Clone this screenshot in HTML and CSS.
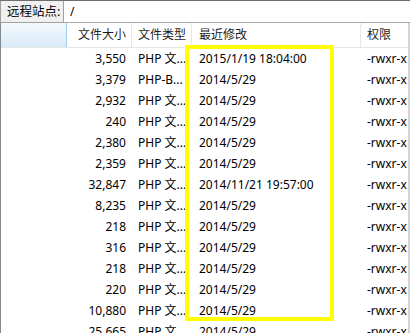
FILE: index.html
```html
<!DOCTYPE html>
<html lang="zh">
<head>
<meta charset="utf-8">
<link rel="stylesheet" href="styles.css">
</head>
<body>
<div class="panel">
  <div class="bar">
    <div class="lbl">远程站点:</div>
    <div class="path">/</div>
  </div>
  <div class="list">
    <div class="head">
      <div class="hc name"></div>
      <div class="hc size">文件大小</div>
      <div class="hc type">文件类型</div>
      <div class="hc date">最近修改</div>
      <div class="hc perm">权限</div>
    </div>
    <div class="row"><div></div><div class="size">3,550</div><div class="type">PHP 文...</div><div class="date">2015/1/19 18:04:00</div><div class="perm">-rwxr-x</div></div>
    <div class="row"><div></div><div class="size">3,379</div><div class="type">PHP-B...</div><div class="date">2014/5/29</div><div class="perm">-rwxr-x</div></div>
    <div class="row"><div></div><div class="size">2,932</div><div class="type">PHP 文...</div><div class="date">2014/5/29</div><div class="perm">-rwxr-x</div></div>
    <div class="row"><div></div><div class="size">240</div><div class="type">PHP 文...</div><div class="date">2014/5/29</div><div class="perm">-rwxr-x</div></div>
    <div class="row"><div></div><div class="size">2,380</div><div class="type">PHP 文...</div><div class="date">2014/5/29</div><div class="perm">-rwxr-x</div></div>
    <div class="row"><div></div><div class="size">2,359</div><div class="type">PHP 文...</div><div class="date">2014/5/29</div><div class="perm">-rwxr-x</div></div>
    <div class="row"><div></div><div class="size">32,847</div><div class="type">PHP 文...</div><div class="date">2014/11/21 19:57:00</div><div class="perm">-rwxr-x</div></div>
    <div class="row"><div></div><div class="size">8,235</div><div class="type">PHP 文...</div><div class="date">2014/5/29</div><div class="perm">-rwxr-x</div></div>
    <div class="row"><div></div><div class="size">218</div><div class="type">PHP 文...</div><div class="date">2014/5/29</div><div class="perm">-rwxr-x</div></div>
    <div class="row"><div></div><div class="size">316</div><div class="type">PHP 文...</div><div class="date">2014/5/29</div><div class="perm">-rwxr-x</div></div>
    <div class="row"><div></div><div class="size">218</div><div class="type">PHP 文...</div><div class="date">2014/5/29</div><div class="perm">-rwxr-x</div></div>
    <div class="row"><div></div><div class="size">220</div><div class="type">PHP 文...</div><div class="date">2014/5/29</div><div class="perm">-rwxr-x</div></div>
    <div class="row"><div></div><div class="size">10,880</div><div class="type">PHP 文...</div><div class="date">2014/5/29</div><div class="perm">-rwxr-x</div></div>
    <div class="row"><div></div><div class="size">25,665</div><div class="type">PHP 文...</div><div class="date">2014/5/29</div><div class="perm">-rwxr-x</div></div>
  </div>
  <div class="highlight"></div>
</div>
</body>
</html>
```

FILE: styles.css
```css
html, body {
  margin: 0;
  padding: 0;
  background: #ffffff;
  overflow: hidden;
}
body {
  font-family: "Noto Sans", "Noto Sans CJK SC", sans-serif;
  font-size: 12px;
  color: #000;
}
.panel {
  position: relative;
  width: 410px;
  height: 333px;
  overflow: hidden;
}
.bar {
  display: flex;
  height: 23px;
  border-top: 1px solid #6e6e6e;
  box-sizing: border-box;
}
.lbl {
  width: 64px;
  box-sizing: border-box;
  background: #f0f0f0;
  border-left: 1px solid #a0a0a0;
  border-right: 1px solid #a0a0a0;
  border-bottom: 1px solid #a0a0a0;
  padding-left: 6px;
  font-size: 12.5px;
  line-height: 21px;
  white-space: nowrap;
}
.path {
  flex: 1;
  border-bottom: 1px solid #a8a8a8;
  padding-left: 6px;
  line-height: 21px;
}
.list {
  border-left: 1px solid #828790;
  border-right: 2px solid #d4d4d4;
  height: 310px;
}
.head, .row {
  display: grid;
  grid-template-columns: 66px 65px 60px 169px 1fr;
  white-space: nowrap;
}
.head {
  height: 25px;
  box-sizing: border-box;
  border-bottom: 1px solid #e5e5e5;
  color: #1e1e1e;
}
.hc {
  line-height: 24px;
  border-right: 1px solid #e3e8ee;
  overflow: hidden;
}
.hc.name {
  background: linear-gradient(#f4f9fd, #e4f1fa 55%, #d8ebf8);
  border-right: 1px solid #9fcdee;
}
.hc.perm { border-right: none; }
.row {
  height: 21px;
  line-height: 21px;
}
.row > div { overflow: hidden; }
.size {
  text-align: right;
  padding-right: 6px;
}
.hc.size { padding-right: 5px; }
.type { padding-left: 6px; }
.date { padding-left: 7px; }
.perm { padding-left: 6px; }
.highlight {
  position: absolute;
  left: 185px;
  top: 45px;
  width: 149px;
  height: 276px;
  box-sizing: border-box;
  border: 4px solid #ffff00;
}
```
